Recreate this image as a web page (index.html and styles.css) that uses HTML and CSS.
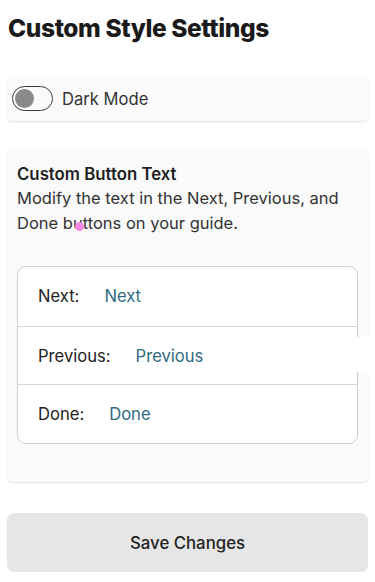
FILE: index.html
```html
<!DOCTYPE html>
<html>
<head>
<meta charset="utf-8">
<link rel="stylesheet" href="styles.css">
</head>
<body>
<div class="page">
  <h1 class="title">Custom Style Settings</h1>
  <div class="card toggle-card">
    <span class="switch"><span class="knob"></span></span>
    <span class="toggle-label">Dark Mode</span>
  </div>
  <div class="card text-card">
    <div class="card-title">Custom Button Text</div>
    <p class="desc">Modify the text in the Next, Previous, and Done buttons on your guide.</p>
    <div class="list">
      <div class="row"><span class="lbl">Next:</span><span class="val">Next</span></div>
      <div class="row"><span class="lbl">Previous:</span><span class="val">Previous</span></div>
      <div class="row"><span class="lbl">Done:</span><span class="val">Done</span></div>
    </div>
  </div>
  <button class="save">Save Changes</button>
</div>
<div class="cursor-dot"></div>
<div class="mask"></div>
</body>
</html>
```
FILE: styles.css
```css
* { box-sizing: border-box; }
html, body { margin: 0; padding: 0; background: #fff; }
body { font-family: Inter, "Noto Sans", sans-serif; color: #1f1f1f; }
.page { padding: 13px 7px 0 7px; display: flex; flex-direction: column; }
.title { margin: 0 0 0 1px; font-size: 24.5px; font-weight: 800; letter-spacing: -0.4px; line-height: 30px; color: #1a1a1a; }
.card { background: #fafafa; border-radius: 5px; box-shadow: 0 1px 2px rgba(0,0,0,0.12); }
.toggle-card { margin-top: 33px; height: 45px; display: flex; align-items: center; padding-left: 5px; }
.switch { width: 41px; height: 25px; border: 1.2px solid #3a3a3a; border-radius: 13px; display: flex; align-items: center; padding-left: 2px; }
.knob { width: 19px; height: 19px; border-radius: 50%; background: #8a8a8a; }
.toggle-label { margin-left: 9px; font-size: 16.6px; color: #333; }
.text-card { margin-top: 29px; height: 332px; padding: 14px 10px 0 10px; }
.card-title { font-size: 16.8px; font-weight: 600; line-height: 20px; color: #1f1f1f; }
.desc { margin: 2px 0 0 0; font-size: 16.5px; line-height: 25px; color: #333; }
.list { margin-top: 30px; background: #fff; border: 1px solid #cfcfcf; border-radius: 9px; }
.row { height: 58.7px; display: flex; align-items: center; padding-left: 20px; font-size: 16.6px; border-top: 1px solid #d4d4d4; }
.row:first-child { border-top: none; }
.lbl { color: #222; }
.val { margin-left: 25px; color: #306c82; }
.save { margin-top: 31px; height: 59px; border: none; border-radius: 8px; background: #e6e6e6; font-family: Inter, "Noto Sans", sans-serif; font-size: 16.8px; font-weight: 500; color: #1f1f1f; box-shadow: 0 1px 2px rgba(0,0,0,0.06); }
.cursor-dot { position: absolute; left: 75px; top: 222px; width: 9px; height: 9px; border-radius: 50%; background: #f78ae8; }
.mask { position: absolute; left: 357px; top: 337px; width: 18px; height: 35px; background: #fff; }
```
